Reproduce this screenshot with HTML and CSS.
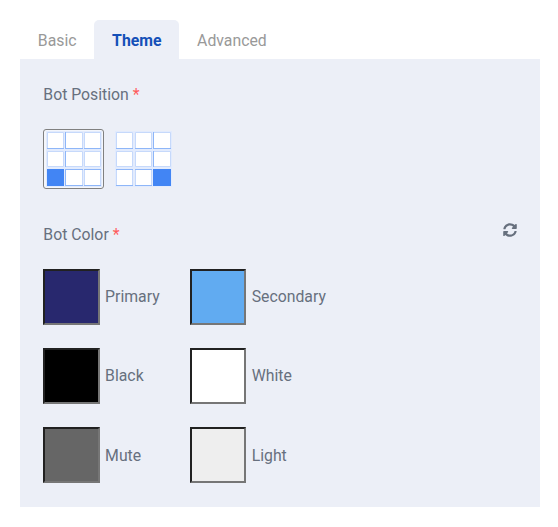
FILE: index.html
```html
<!DOCTYPE html>
<html lang="en">
<head>
<meta charset="utf-8">
<title>Bot settings</title>
<link rel="stylesheet" href="styles.css">
</head>
<body>
<nav class="tabs">
  <a class="tab">Basic</a>
  <a class="tab active">Theme</a>
  <a class="tab">Advanced</a>
</nav>
<main class="panel">
  <div class="label">Bot Position <span class="required">*</span></div>
  <div class="positions">
    <div class="position selected">
      <svg width="56" height="56" viewBox="0 0 56 56">
        <rect class="halo" width="56" height="56"/>
        <g class="lines">
          <path d="M1.500 1.500h16v16h-16zM19.500 1.500h17v16h-17zM38.500 1.500h16v16h-16zM1.500 20.500h16v15h-16zM19.500 20.500h17v15h-17zM38.500 20.500h16v15h-16zM19.500 38.500h17v16h-17zM38.500 38.500h16v16h-16z"/>
          <path class="strong" d="M1 17.500h17M19 17.500h18M38 17.500h17M19.500 1v17M19.500 20v16M19.500 38v17M19 38.500h18M38 38.500h17M19 54.500h18M38 54.500h17"/>
        </g>
        <rect class="bot" x="1" y="38" width="17" height="17"/>
      </svg>
    </div>
    <div class="position">
      <svg width="57" height="56" viewBox="0 0 57 56">
        <rect class="halo" width="57" height="56"/>
        <g class="lines">
          <path d="M1.500 1.500h16v16h-16zM20.500 1.500h16v16h-16zM38.500 1.500h17v16h-17zM1.500 20.500h16v15h-16zM20.500 20.500h16v15h-16zM38.500 20.500h17v15h-17zM1.500 38.500h16v16h-16zM20.500 38.500h16v16h-16z"/>
          <path class="strong" d="M1 17.500h17M20 17.500h17M38 17.500h18M38.500 1v17M38.500 20v16M1 38.500h17M20 38.500h17M1 54.500h17M20 54.500h17"/>
        </g>
        <rect class="bot" x="38" y="38" width="18" height="17"/>
      </svg>
    </div>
  </div>
  <div class="color-head">
    <div class="label">Bot Color <span class="required">*</span></div>
    <svg class="refresh" width="14" height="14" viewBox="0 0 512 512"><path d="M370.7 133.3C339.5 104 298.9 88 255.8 88c-77.500.1-144.300 53.200-162.800 126.900-1.300 5.400-6.100 9.100-11.700 9.100H24.100c-7.500 0-13.200-6.800-11.800-14.200C33.900 94.900 134.800 8 256 8c66.400 0 126.800 26.100 171.300 68.700L463 41C478.100 25.900 504 36.600 504 57.900V192c0 13.300-10.700 24-24 24H345.900c-21.400 0-32.100-25.900-17-41l41.800-41.700zM32 296h134.100c21.400 0 32.100 25.900 17 41l-41.800 41.800c31.300 29.300 71.800 45.300 114.900 45.200 77.400-.1 144.300-53.100 162.800-126.800 1.300-5.400 6.100-9.200 11.700-9.200h57.300c7.500 0 13.200 6.800 11.800 14.200C478.100 417.100 377.200 504 256 504c-66.400 0-126.800-26.100-171.300-68.700L49 471C33.900 486.100 8 475.400 8 454.100V320c0-13.300 10.700-24 24-24z"/></svg>
  </div>
  <div class="colors">
    <div class="color"><span class="swatch primary"></span><span class="name">Primary</span></div>
    <div class="color"><span class="swatch secondary"></span><span class="name">Secondary</span></div>
    <div class="color"><span class="swatch black"></span><span class="name">Black</span></div>
    <div class="color"><span class="swatch white"></span><span class="name">White</span></div>
    <div class="color"><span class="swatch mute"></span><span class="name">Mute</span></div>
    <div class="color"><span class="swatch light"></span><span class="name">Light</span></div>
  </div>
</main>
</body>
</html>
```

FILE: styles.css
```css
* { box-sizing: border-box; }
body {
  margin: 0;
  padding: 20px 18px 20px 20px;
  background: #fff;
  color: #67707e;
  font: 15.8px/24px Roboto, sans-serif;
}
.tabs { display: flex; height: 39px; }
.tab {
  padding: 9px 17.8px 0;
  color: #999;
  border-radius: 5px 5px 0 0;
}
.tab.active {
  background: #eceff7;
  color: #1450b8;
  font-weight: 700;
}
.panel {
  height: 448px;
  padding: 24px 23px 0;
  background: #eceff7;
}
.label { padding-left: 0.3px; }
.required { color: #ff5b5c; }
.positions {
  display: flex;
  gap: 9px;
  margin: 22px 0 33px;
}
.position {
  width: 61px;
  height: 60px;
  padding: 1px 0 0 1px;
  border: 1px solid transparent;
  border-radius: 3px;
}
.position.selected {
  padding-left: 2px;
  border-color: #808080;
  background: #f4f6fb;
}
.position svg { display: block; }
.halo { fill: #e2ebfd; }
.lines path { fill: #fff; stroke: #c6d9fb; }
.lines .strong { fill: none; stroke: #8eb6f8; }
.bot { fill: #4285f4; }
.color-head { display: flex; justify-content: space-between; }
.color-head .label { padding-top: 1px; }
.refresh { margin-top: 1px; fill: #67707e; }
.colors {
  display: grid;
  grid-template-columns: 146.6px 146.6px;
  row-gap: 23.2px;
  margin-top: 22px;
}
.color { display: flex; align-items: center; gap: 5.6px; }
.color:nth-child(n+5) .name { padding-top: 1.4px; }
.swatch {
  width: 56.5px;
  height: 56px;
  border: 2px solid;
  border-color: #212121 #767676 #767676 #212121;
}
.primary { background: #28286e; }
.secondary { background: #61abf1; }
.black { background: #000; }
.white { background: #fff; }
.mute { background: #666; }
.light { background: #eee; }
```
